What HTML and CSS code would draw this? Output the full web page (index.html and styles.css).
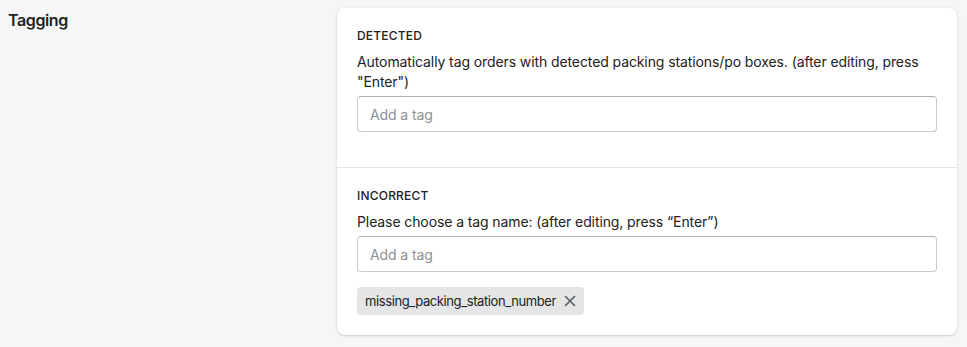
FILE: index.html
```html
<!DOCTYPE html>
<html>
<head>
<meta charset="utf-8">
<link rel="stylesheet" href="styles.css">
</head>
<body>
<div class="layout">
  <div class="annotation">
    <h2 class="annotation-title">Tagging</h2>
  </div>
  <div class="card">
    <div class="section section-first">
      <h3 class="subheading">DETECTED</h3>
      <p class="label">Automatically tag orders with detected packing stations/po boxes. (after editing, press "Enter")</p>
      <div class="field"><input class="input" type="text" placeholder="Add a tag"></div>
    </div>
    <div class="section section-last">
      <h3 class="subheading">INCORRECT</h3>
      <p class="label">Please choose a tag name: (after editing, press “Enter”)</p>
      <div class="field"><input class="input" type="text" placeholder="Add a tag"></div>
      <div class="tags">
        <span class="tag">missing_packing_station_number
          <span class="tag-remove"><svg width="12" height="12" viewBox="0 0 12 12"><path d="M1.5 1.5L10.5 10.5M10.5 1.5L1.5 10.5" stroke="#5c5f62" stroke-width="1.7" stroke-linecap="round"/></svg></span>
        </span>
      </div>
    </div>
  </div>
</div>
</body>
</html>
```
FILE: styles.css
```css
* { box-sizing: border-box; }
html, body { margin: 0; padding: 0; }
body {
  background: #f6f6f7;
  font-family: Inter, "Noto Sans", sans-serif;
  color: #202223;
  font-size: 14px;
  line-height: 20px;
  letter-spacing: -0.1px;
}
.layout {
  display: grid;
  grid-template-columns: 309px 1fr;
  column-gap: 20px;
  padding: 8px 10px 8px 8px;
  align-items: start;
}
.annotation-title {
  margin: 0;
  font-size: 16px;
  line-height: 24px;
  font-weight: 600;
  letter-spacing: -0.4px;
}
.card {
  background: #fff;
  border-radius: 8px;
  box-shadow: 0 0 5px rgba(23, 24, 24, 0.05), 0 1px 2px rgba(0, 0, 0, 0.15);
}
.section { padding: 20px; }
.section-first { padding-bottom: 35px; }
.section-last { border-top: 1px solid #e1e3e5; padding-top: 20px; }
.subheading {
  margin: 0 0 8px;
  font-size: 12px;
  line-height: 16px;
  font-weight: 500;
  letter-spacing: 0.2px;
}
.label { margin: 0 0 4px; }
.input {
  display: block;
  width: 100%;
  height: 36px;
  border: 1px solid #c9cccf;
  border-top-color: #aeb4b9;
  border-radius: 4px;
  padding: 0 12px;
  font-family: inherit;
  font-size: 14px;
  letter-spacing: -0.1px;
  color: #202223;
  background: #fff;
  outline: none;
}
.input::placeholder { color: #8c9196; }
.tags { display: flex; margin-top: 15px; }
.tag {
  display: inline-flex;
  align-items: center;
  height: 28px;
  padding: 0 8px;
  background: #e4e5e7;
  border-radius: 4px;
  font-size: 13px;
  letter-spacing: -0.4px;
  color: #202223;
  gap: 8px;
}
.tag-remove { display: flex; }
```
